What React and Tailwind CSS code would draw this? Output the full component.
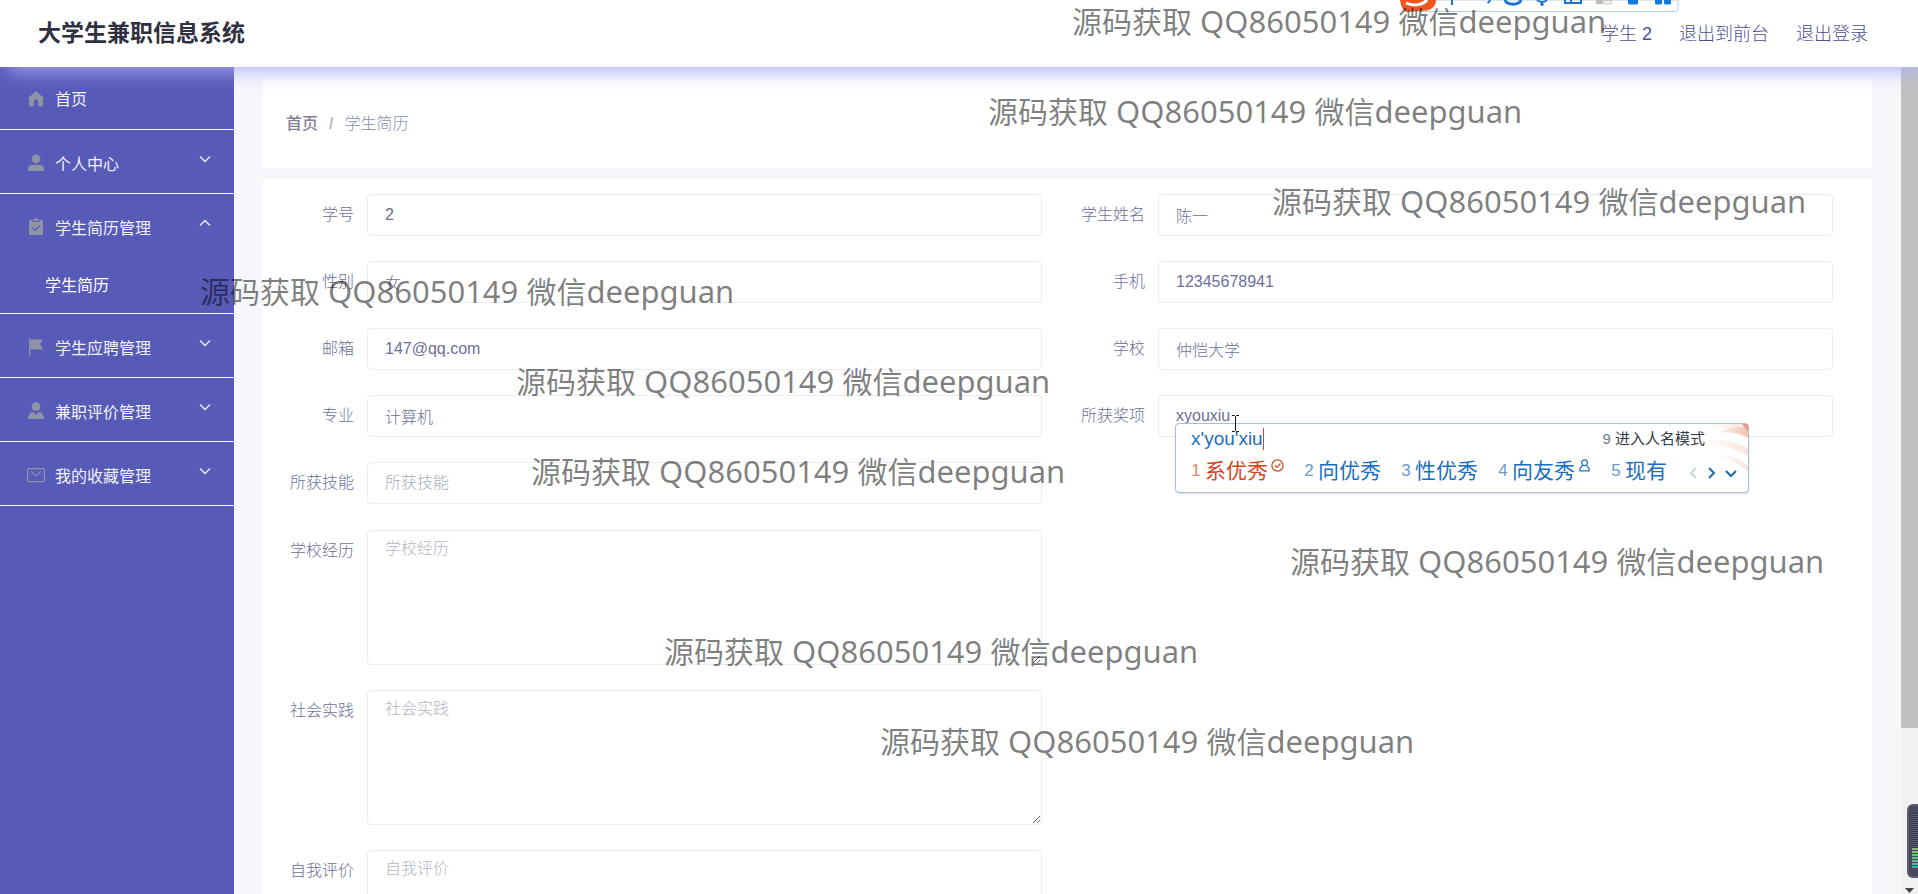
import React, { useState } from "react";

const menuItems = [
  { icon: "home", title: "首页" },
  { icon: "user", title: "个人中心", children: [] },
  { icon: "claim", title: "学生简历管理", children: ["学生简历"], open: true },
  { icon: "flag", title: "学生应聘管理", children: [] },
  { icon: "custom", title: "兼职评价管理", children: [] },
  { icon: "message", title: "我的收藏管理", children: [] },
];

const fields = [
  { name: "xuehao", label: "学号", value: "2" },
  { name: "xingming", label: "学生姓名", value: "陈一" },
  { name: "xingbie", label: "性别", value: "女" },
  { name: "shouji", label: "手机", value: "12345678941" },
  { name: "youxiang", label: "邮箱", value: "147@qq.com" },
  { name: "xuexiao", label: "学校", value: "仲恺大学" },
  { name: "zhuanye", label: "专业", value: "计算机" },
  { name: "jiangxiang", label: "所获奖项", value: "xyouxiu", ime: true },
  { name: "jineng", label: "所获技能", value: "" },
];

const areas = [
  { name: "jingli", label: "学校经历" },
  { name: "shijian", label: "社会实践" },
  { name: "pingjia", label: "自我评价" },
];

const candidates = [
  { text: "系优秀", badge: "check" },
  { text: "向优秀" },
  { text: "性优秀" },
  { text: "向友秀", badge: "person" },
  { text: "现有" },
];

const watermarks = [
  "ml-[1072px]",
  "ml-[988px]",
  "ml-[1272px]",
  "ml-[200px]",
  "ml-[516px]",
  "ml-[531px]",
  "ml-[1290px]",
  "ml-[664px]",
  "ml-[880px]",
];

function MenuIcon({ name }) {
  return (
    <svg className="mt-0.5 h-[18px] w-[18px] shrink-0 text-[#8f93a6]" viewBox="0 0 18 18" fill="currentColor">
      {name === "home" && <path d="M9 1 17 8.2V9h-1v7.2H11.2V11.5a2.2 2.2 0 0 0-4.4 0v4.7H2V9H1v-.8Z" />}
      {name === "user" && (
        <>
          <circle cx="9" cy="5" r="4.4" />
          <path d="M1 17v-2a4 4 0 0 1 4-4h8a4 4 0 0 1 4 4v2Z" />
        </>
      )}
      {name === "claim" && (
        <>
          <path d="M2 2h3.5v2h7V2H16v15H2Z" />
          <path d="M6.5.5h5v2.6h-5Z" />
          <path d="m5.5 9.5 2.7 2.7 4.6-4.8" fill="none" stroke="#585ab7" strokeWidth="1.3" />
        </>
      )}
      {name === "flag" && (
        <>
          <path d="M2 0h1.2v18H2Z" />
          <path d="M3.2 1.5H16l-3 4.8 3.2 5.2H3.2Z" />
        </>
      )}
      {name === "custom" && (
        <>
          <circle cx="9" cy="4.6" r="4.4" />
          <path d="M.8 17c.4-4.2 2.5-6.6 5.2-7.2L9 13l3-3.2c2.7.6 4.8 3 5.2 7.2Z" />
        </>
      )}
      {name === "message" && (
        <g fill="none" stroke="currentColor" strokeWidth="1.2">
          <rect x=".6" y="2.6" width="16.8" height="13" rx="1.2" />
          <path d="m4 5.5 5 4.5 5-4.5" />
        </g>
      )}
    </svg>
  );
}

function Chevron({ up }) {
  return (
    <svg className="mb-1.5 ml-auto h-3 w-3" viewBox="0 0 12 12" fill="none" stroke="#e8e8fa" strokeWidth="1.5">
      <path d={up ? "m1 8.5 5-5 5 5" : "m1 3.5 5 5 5-5"} />
    </svg>
  );
}

function Sidebar() {
  return (
    <nav className="w-[234px] shrink-0 bg-[#585ab7] text-base font-normal text-[#f0f0ff]">
      <ul>
        {menuItems.map((item) => (
          <li key={item.title} className="border-b border-white">
            <button
              type="button"
              className={`flex w-full items-center pl-[27px] pr-[23px] text-left ${
                item.children ? "h-[63px]" : "h-[62px]"
              }`}
            >
              <MenuIcon name={item.icon} />
              <span className={item.children ? "ml-2.5 pt-1.5" : "ml-2.5 pt-1"}>{item.title}</span>
              {item.children && <Chevron up={item.open} />}
            </button>
            {item.open &&
              item.children.map((child) => (
                <a key={child} href="#resume" className="flex h-14 items-center pl-[45px] pt-0.5 text-white">
                  {child}
                </a>
              ))}
          </li>
        ))}
      </ul>
    </nav>
  );
}

function CandidateBadge({ type }) {
  return (
    <svg className="mb-3 ml-[3px] h-[13px] w-[13px]" viewBox="0 0 13 13" fill="none" stroke="currentColor" strokeWidth="1.2">
      {type === "check" ? (
        <>
          <circle cx="6.5" cy="6.5" r="5.6" />
          <path d="m3.8 6.4 2.1 2.1 3.6-4" />
        </>
      ) : (
        <>
          <circle cx="6.5" cy="3.8" r="2.9" />
          <path d="M4.6 6.2 2 9.5v2.4h9V9.5L8.4 6.2" />
        </>
      )}
    </svg>
  );
}

function ImePopup() {
  return (
    <div className="absolute left-[17px] top-[28px] z-10 h-[70px] w-[574px] rounded-sm border border-[#a9bfd6] bg-white pl-[15px] font-normal shadow-sm">
      {/* skin petals */}
      <svg className="absolute right-0 top-0 h-[50px] w-[48px]" viewBox="0 0 48 50" fill="none">
        <defs>
          <linearGradient id="petal">
            <stop offset="0" stopColor="#fdf3ef" />
            <stop offset="1" stopColor="#f3c3b2" />
          </linearGradient>
          <linearGradient id="petalLight">
            <stop offset="0" stopColor="#ffffff" />
            <stop offset="1" stopColor="#fae6df" />
          </linearGradient>
        </defs>
        <path d="M2 0h46v13C40 5 24 2 2 6Z" fill="url(#petalLight)" />
        <path d="M18 9c12-6 20-6 30-6v11c-9-5-18-7-30-5Z" fill="url(#petal)" />
        <path d="M0 18c14-4 32-2 48 6v8C34 24 16 20 0 18Z" fill="url(#petalLight)" />
        <path d="M14 32c12-3 24 1 34 10v6C38 38 26 33 14 32Z" fill="url(#petalLight)" />
        <path d="M42 0h6v7Z" fill="#e79a83" />
      </svg>
      <div className="relative flex h-[30px] items-center">
        <span className="text-[19px] text-[#1a6fc0]">x'you'xiu</span>
        <span className="h-[22px] w-px bg-[#e0402a]" />
        <span className="ml-auto mr-[43px] text-[15px] text-[#333b4a]">
          <span className="text-[#6c7c90]">9</span> 进入人名模式
        </span>
      </div>
      <div className="relative flex h-[34px] items-center gap-5">
        {candidates.map((c, i) => (
          <button
            key={c.text}
            type="button"
            className={`flex items-center text-[21px] ${i === 0 ? "text-[#d0461f]" : "text-[#1a6fc0]"}`}
          >
            <span className={`mr-1 w-[10px] text-[17px] ${i === 0 ? "text-[#d98a6c]" : "text-[#6b9bc8]"}`}>{i + 1}</span>
            {c.text}
            {c.badge && <CandidateBadge type={c.badge} />}
          </button>
        ))}
        <svg className="ml-auto mr-2.5 mt-1 h-3 w-[50px]" viewBox="0 0 50 12" fill="none" strokeWidth="2">
          <path d="M8 1 3 6l5 5" stroke="#c9d6d8" />
          <path d="m21 1 5 5-5 5" stroke="#1a6fa8" />
          <path d="m38 4 5 5 5-5" stroke="#1a6fa8" />
        </svg>
      </div>
      {/* text cursor */}
      <svg className="absolute left-[55px] -top-[9px] h-[17px] w-[9px]" viewBox="0 0 9 17" fill="none" stroke="#111">
        <path d="M1 .5h2.5l1 1 1-1H8M4.5 1.5v14M1 16.5h2.5l1-1 1 1H8" />
      </svg>
    </div>
  );
}

function FormField({ label, name, children }) {
  return (
    <div className="flex pr-[26px]">
      <label htmlFor={name} className="h-[42px] w-[90px] shrink-0 pr-[13px] text-right leading-[42px]">
        {label}
      </label>
      <div className="relative grow">{children}</div>
    </div>
  );
}

function ResumeForm() {
  const [values, setValues] = useState(Object.fromEntries(fields.map((f) => [f.name, f.value])));

  const handleChange = (e) => {
    setValues({ ...values, [e.target.name]: e.target.value });
  };

  return (
    <form className="mt-[11px] grow bg-white pl-[14px] pr-[13px] pt-[15px] text-base text-[#6d6e9c]">
      <div className="grid grid-cols-2 gap-y-[25px]">
        {fields.map((f) => (
          <FormField key={f.name} label={f.label} name={f.name}>
            <input
              id={f.name}
              name={f.name}
              type="text"
              placeholder={f.label}
              value={values[f.name]}
              onChange={handleChange}
              className="block h-[42px] w-full rounded border border-[#ebedf2] px-[17px] outline-none placeholder:text-[#a9adb6]"
            />
            {f.ime && <ImePopup />}
          </FormField>
        ))}
      </div>
      <div className="mt-[26px] grid w-1/2 gap-y-[25px]">
        {areas.map((a) => (
          <FormField key={a.name} label={a.label} name={a.name}>
            <textarea
              id={a.name}
              name={a.name}
              placeholder={a.label}
              className="block h-[135px] w-full resize-y rounded border border-[#ebedf2] px-[17px] py-1.5 outline-none placeholder:text-[#b4b7be]"
            />
          </FormField>
        ))}
      </div>
    </form>
  );
}

// Input method status bar, half hidden above the window edge
function ImeToolbar() {
  return (
    <svg className="absolute right-[239px] top-0 h-[13px] w-[280px]" viewBox="0 0 280 13" fill="none">
      <path d="M12 0h267v9a2.5 2.5 0 0 1-2.5 2.5H20" fill="#fff" stroke="#b5cfe4" />
      <path d="M1 0h36c0 5-3 9-9 10.5L8 12C4 11 2 6 1 0Z" fill="#f0551f" />
      <path d="M7 3c6 3 16 3 21-3" stroke="#fff" strokeWidth="3" />
      <path d="M53 0v5M91 0c0 1-1 2-2.5 3" stroke="#1b73d0" strokeWidth="2" />
      <path d="M106 0c2 5.5 14 5.5 16 0" stroke="#1b73d0" strokeWidth="3" />
      <path d="M138 0c2 2.5 8 2.5 10 0" stroke="#1b73d0" strokeWidth="2" />
      <circle cx="143" cy="4.2" r="1.7" fill="#1b73d0" />
      <path d="M166 0v3h16V0M172 0v3" stroke="#1b73d0" strokeWidth="2" />
      <path d="M197 0h7v4h-7Z" fill="#b9bcc2" />
      <path d="M205 .5h7.5v3.5H205Z" fill="#f2f2f2" stroke="#ccc" />
      <path d="M229 0h10v3a1.5 1.5 0 0 1-1.5 1.5h-7A1.5 1.5 0 0 1 229 3Z" fill="#0c7be0" />
      <path d="M256 0h7v3a1.5 1.5 0 0 1-1.5 1.5h-4A1.5 1.5 0 0 1 256 3ZM265 0h7v3a1.5 1.5 0 0 1-1.5 1.5h-4A1.5 1.5 0 0 1 265 3Z" fill="#0c7be0" />
    </svg>
  );
}

function LevelMeter() {
  return (
    <div className="absolute bottom-4 right-0 h-[74px] w-[11px] rounded-l-md border-2 border-r-0 border-[#5b5e70] bg-[#474a5c] pl-[3px] pt-[7px]">
      <div className="h-[35px] bg-[repeating-linear-gradient(#353848_0_1px,#5a5e70_1px_2px)]" />
      <div className="flex h-[22px] flex-col gap-px">
        <div className="h-0.5 bg-[#7fbf6b]" />
        <div className="h-0.5 bg-[#7fbf6b]" />
        <div className="h-0.5 bg-[#74c07a]" />
        <div className="h-0.5 bg-[#68bf8c]" />
        <div className="h-0.5 bg-[#5cbb9c]" />
        <div className="h-0.5 bg-[#52b5a8]" />
        <div className="h-0.5 bg-[#4aa9ac]" />
      </div>
    </div>
  );
}

export default function App() {
  return (
    <div className="relative flex h-screen flex-col overflow-hidden bg-white font-['Liberation_Sans','Noto_Sans_CJK_SC',sans-serif] font-light">
      <header className="relative z-10 flex h-[67px] shrink-0 items-center bg-white pl-[38px] pr-[50px] shadow-[8px_4px_18px_rgba(170,174,252,0.9)]">
        <h1 className="text-[23px] font-bold text-[#2f3040]">大学生兼职信息系统</h1>
        <div className="ml-auto flex gap-[27px] text-lg text-[#4f4b94]">
          <span>学生 2</span>
          <a href="#front">退出到前台</a>
          <a href="#logout">退出登录</a>
        </div>
      </header>

      <div className="flex min-h-0 grow">
        <Sidebar />
        <main className="flex grow flex-col overflow-hidden bg-[#f6f7fb] px-[29px] pt-3">
          <div className="flex h-[89px] shrink-0 items-center gap-[11px] bg-white pl-[23px] text-base">
            <a href="#home" className="font-medium text-[#82829a]">首页</a>
            <span className="font-bold text-[#b4b8c6]">/</span>
            <span className="text-[#8490ad]">学生简历</span>
          </div>
          <ResumeForm />
        </main>
        {/* page scrollbar */}
        <div className="flex w-[17px] shrink-0 flex-col items-center justify-between bg-[#f1f1f1] pb-px">
          <div className="h-4/5 w-full bg-[#c1c1c1]" />
          <svg className="h-[5px] w-[9px]" viewBox="0 0 9 5" fill="#444">
            <path d="M0 0h9L4.5 5Z" />
          </svg>
        </div>
      </div>

      {/* overlays */}
      <div className="pointer-events-none absolute inset-0 z-20 overflow-hidden">
        <ImeToolbar />
        <LevelMeter />
        <div className="absolute left-0 -top-6 font-['Noto_Sans','Noto_Sans_CJK_SC',sans-serif] text-[31px] font-normal text-black/50">
          {watermarks.map((offset) => (
            <p key={offset} className={`h-[90px] whitespace-pre leading-[90px] ${offset}`}>
              <span className="text-[30px]">源码获取</span> QQ86050149 <span className="text-[30px]">微信</span>deepguan
            </p>
          ))}
        </div>
      </div>
    </div>
  );
}
